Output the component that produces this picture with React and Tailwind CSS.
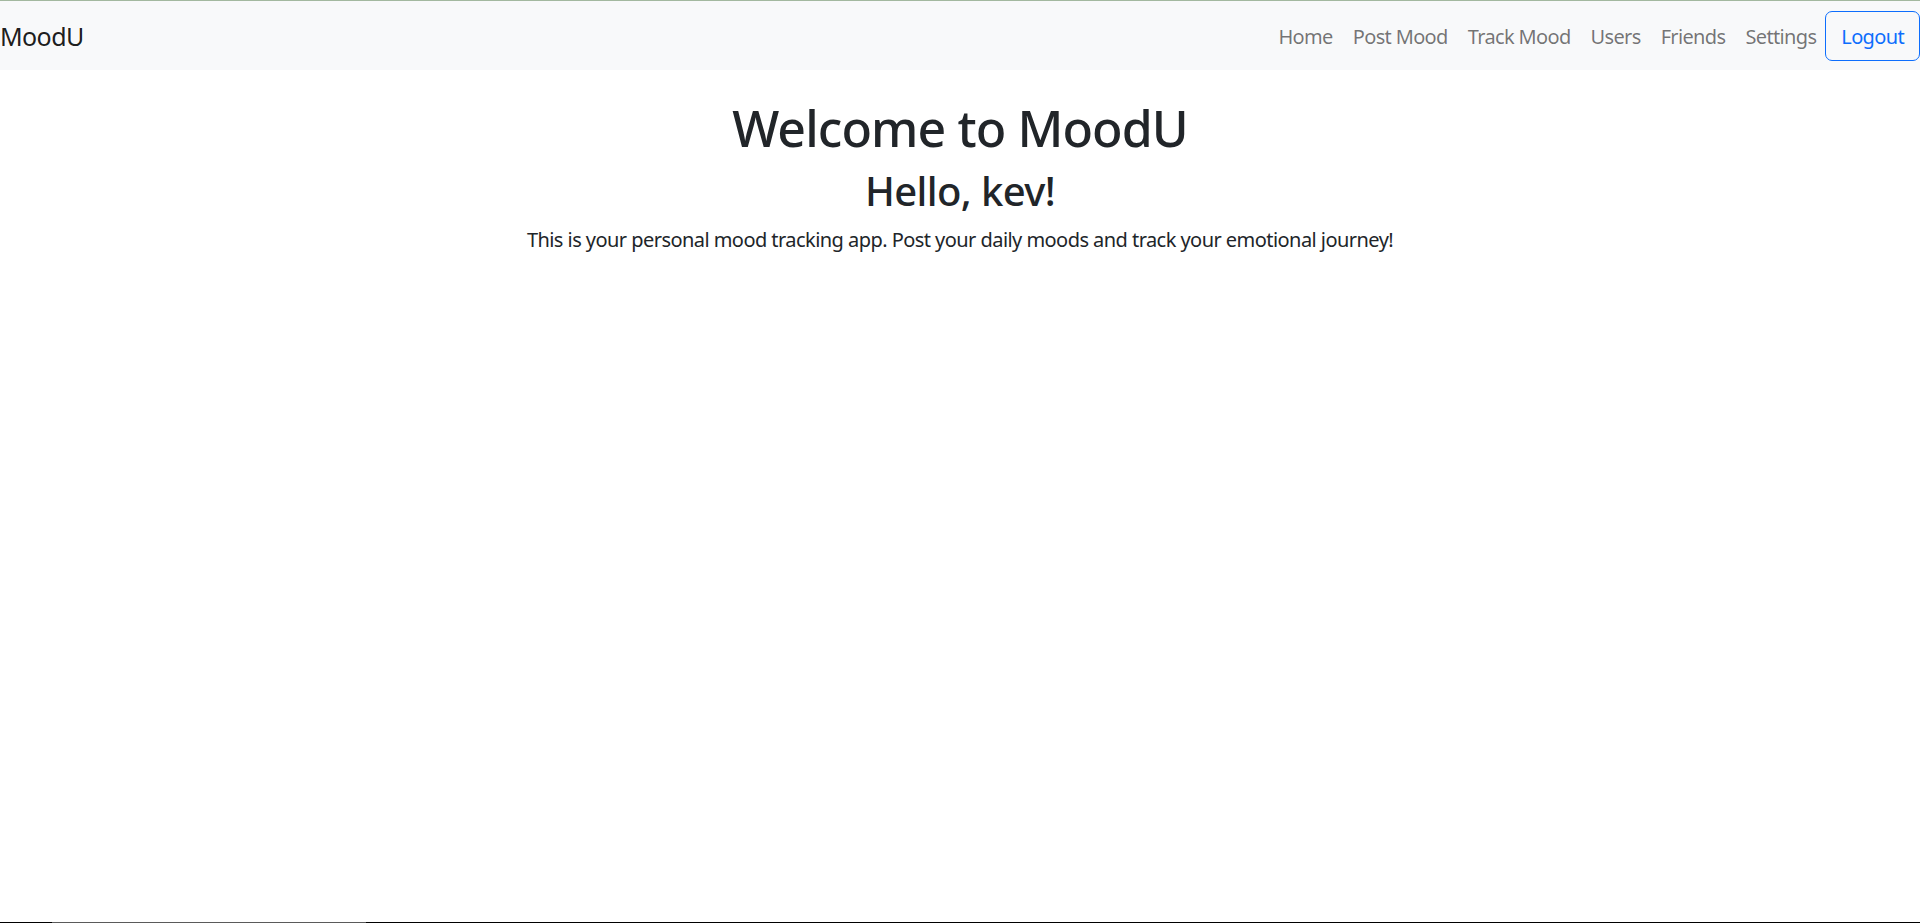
const NAV = ['Home', 'Post Mood', 'Track Mood', 'Users', 'Friends', 'Settings'];

export default function App() {
  return (
    <div
      className="flex flex-col h-screen bg-white text-[#212529] text-[20px]"
      style={{ fontFamily: '"Noto Sans", "Open Sans", sans-serif' }}
    >
      <div className="h-px bg-[#a3b89f]" />
      <nav className="flex items-center justify-between h-[69px] bg-[#f8f9fa]">
        <span className="text-[25px] text-black/90 tracking-[-0.6px] leading-none pt-[2px]">MoodU</span>
        <div className="flex items-center tracking-[-0.65px]">
          {NAV.map((l) => (
            <a key={l} className="px-[10px] pt-[2px] text-black/55 leading-[30px]">{l}</a>
          ))}
          <button className="ml-[-1px] h-[50px] px-[15px] pt-[2px] rounded-[7px] border border-[#0d6efd] text-[#0d6efd] leading-none">
            Logout
          </button>
        </div>
      </nav>

      <main className="flex-1 flex flex-col items-center text-center pt-[28px]">
        <h1 className="text-[50px] font-medium leading-[1.2] tracking-[-0.9px]">Welcome to MoodU</h1>
        <h2 className="text-[40px] font-medium leading-[1.2] tracking-[-0.6px] mt-[9px]">Hello, kev!</h2>
        <p className="mt-[10px] leading-[1.5] tracking-[-0.55px]">
          This is your personal mood tracking app. Post your daily moods and track your emotional journey!
        </p>
      </main>

      <div className="flex h-px">
        <div className="w-[52px] bg-black" />
        <div className="w-[314px] bg-[#5a5a5a]" />
        <div className="flex-1 bg-black" />
      </div>
    </div>
  );
}
